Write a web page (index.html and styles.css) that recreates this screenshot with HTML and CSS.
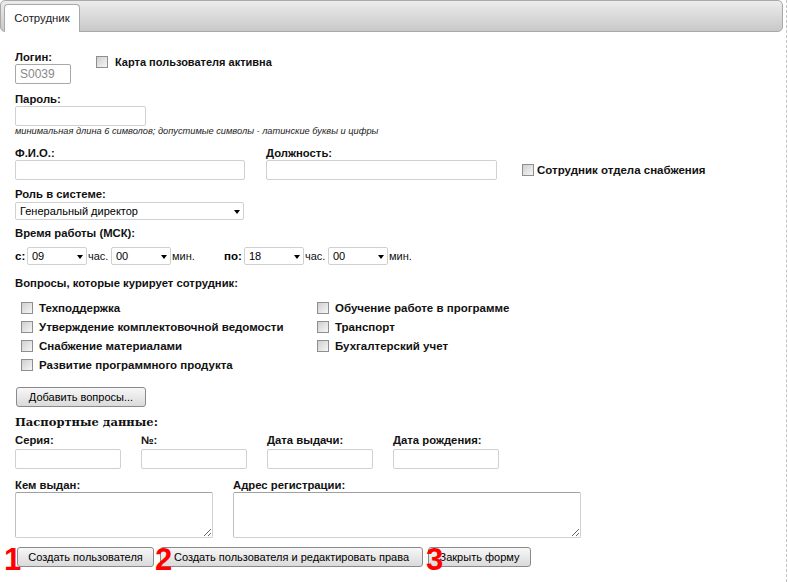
FILE: index.html
```html
<!DOCTYPE html>
<html lang="ru">
<head>
<meta charset="utf-8">
<title>Сотрудник</title>
<link rel="stylesheet" href="styles.css">
</head>
<body>
<div class="page">
  <div class="tabs"><div class="tab">Сотрудник</div></div>
  <div class="content">
    <div class="row row-login">
      <div class="field">
        <label class="lbl">Логин:</label>
        <div class="input input-login">S0039</div>
      </div>
      <div class="chk chk-card"><span class="box"></span><span>Карта пользователя активна</span></div>
    </div>

    <div class="field field-pass">
      <label class="lbl">Пароль:</label>
      <div class="input input-pass"></div>
    </div>
    <div class="hint">минимальная длина 6 символов; допустимые символы - латинские буквы и цифры</div>

    <div class="row row-fio">
      <div class="field">
        <label class="lbl">Ф.И.О.:</label>
        <div class="input input-fio"></div>
      </div>
      <div class="field">
        <label class="lbl">Должность:</label>
        <div class="input input-post"></div>
      </div>
      <div class="chk chk-supply"><span class="box"></span><span>Сотрудник отдела снабжения</span></div>
    </div>

    <div class="field field-role">
      <label class="lbl">Роль в системе:</label>
      <div class="select select-role"><span>Генеральный директор</span><i class="arrow"></i></div>
    </div>

    <div class="lbl lbl-time">Время работы (МСК):</div>
    <div class="time-row">
      <b class="t-from">с:</b>
      <div class="select select-time"><span>09</span><i class="arrow"></i></div>
      <span class="unit u-h">час.</span>
      <div class="select select-time"><span>00</span><i class="arrow"></i></div>
      <span class="unit">мин.</span>
      <b class="t-to">по:</b>
      <div class="select select-time"><span>18</span><i class="arrow"></i></div>
      <span class="unit u-h">час.</span>
      <div class="select select-time"><span>00</span><i class="arrow"></i></div>
      <span class="unit">мин.</span>
    </div>

    <div class="lbl lbl-q">Вопросы, которые курирует сотрудник:</div>
    <div class="questions">
      <div class="qcol qcol1">
        <div class="chk q"><span class="box"></span><span>Техподдержка</span></div>
        <div class="chk q"><span class="box"></span><span>Утверждение комплектовочной ведомости</span></div>
        <div class="chk q"><span class="box"></span><span>Снабжение материалами</span></div>
        <div class="chk q"><span class="box"></span><span>Развитие программного продукта</span></div>
      </div>
      <div class="qcol">
        <div class="chk q"><span class="box"></span><span>Обучение работе в программе</span></div>
        <div class="chk q"><span class="box"></span><span>Транспорт</span></div>
        <div class="chk q"><span class="box"></span><span>Бухгалтерский учет</span></div>
      </div>
    </div>

    <button class="btn btn-add" type="button">Добавить вопросы...</button>

    <div class="pass-title">Паспортные данные:</div>
    <div class="row row-pass">
      <div class="field"><label class="lbl">Серия:</label><div class="input input-sm"></div></div>
      <div class="field"><label class="lbl">№:</label><div class="input input-sm"></div></div>
      <div class="field"><label class="lbl">Дата выдачи:</label><div class="input input-sm"></div></div>
      <div class="field"><label class="lbl">Дата рождения:</label><div class="input input-sm"></div></div>
    </div>

    <div class="row row-area">
      <div class="field"><label class="lbl">Кем выдан:</label><textarea class="area area-issued"></textarea></div>
      <div class="field"><label class="lbl">Адрес регистрации:</label><textarea class="area area-addr"></textarea></div>
    </div>
  </div>

  <div class="actions">
    <div class="act act1"><span class="num n1">1</span><button class="btn btn-create" type="button">Создать пользователя</button></div>
    <div class="act act2"><span class="num n2">2</span><button class="btn btn-create2" type="button">Создать пользователя и редактировать права</button></div>
    <div class="act act3"><span class="num n3">3</span><button class="btn btn-close" type="button">Закрыть форму</button></div>
  </div>
</div>
</body>
</html>
```

FILE: styles.css
```css
html, body {
  margin: 0;
  padding: 0;
  background: #fff;
}
body {
  font-family: "Liberation Sans", Arial, sans-serif;
  font-size: 12px;
  color: #000;
}
.page {
  width: 787px;
  height: 582px;
  box-sizing: border-box;
  border-right: 1px dashed #c4c4c4;
  overflow: hidden;
}
.tabs {
  width: 783px;
  height: 32px;
  box-sizing: border-box;
  border: 1px solid #a9a9a9;
  border-radius: 5px;
  background: linear-gradient(#ececec, #c8c8c8);
  padding: 3px 0 0 3px;
  display: flex;
  align-items: flex-start;
}
.tab {
  width: 76px;
  height: 28px;
  box-sizing: border-box;
  background: #fff;
  border: 1px solid #a9a9a9;
  border-bottom: none;
  border-radius: 4px 4px 0 0;
  text-align: center;
  line-height: 27px;
  font-size: 11.4px;
  color: #222;
}
.content {
  padding-left: 15px;
}
.row {
  display: flex;
}
.field {
  display: flex;
  flex-direction: column;
}
.lbl {
  display: block;
  font-weight: bold;
  font-size: 11.3px;
  line-height: 14px;
  color: #111;
}
.input {
  height: 20px;
  box-sizing: border-box;
  border: 1px solid #d0d0d0;
  border-radius: 2px;
  background: #fff;
  font-size: 12px;
  line-height: 18px;
  padding-left: 4px;
}
.row-login {
  margin-top: 18px;
}
.input-login {
  width: 56px;
  color: #888;
  border-color: #a8a8a8;
}
.chk {
  display: flex;
  align-items: center;
  font-weight: bold;
  font-size: 11.5px;
  line-height: 14px;
  color: #111;
}
.box {
  width: 12px;
  height: 12px;
  box-sizing: border-box;
  border: 1px solid #8e8e8e;
  background: linear-gradient(135deg, #cfcfcf, #f6f6f6);
  flex: none;
}
.chk-card {
  margin-left: 25px;
  margin-top: 5px;
  align-self: flex-start;
  gap: 7px;
  font-size: 11px;
}
.field-pass {
  margin-top: 8px;
}
.input-pass {
  width: 131px;
}
.hint {
  font-style: italic;
  font-size: 9.25px;
  line-height: 11px;
  color: #222;
}
.row-fio {
  margin-top: 9px;
  gap: 21px;
}
.input-fio {
  width: 230px;
}
.input-post {
  width: 231px;
}
.chk-supply {
  margin-top: 14px;
  height: 20px;
  margin-left: 4px;
  gap: 3px;
}
.field-role {
  margin-top: 7px;
}
.select {
  position: relative;
  box-sizing: border-box;
  height: 18px;
  border: 1px solid #d0d0d0;
  border-radius: 2px;
  background: #fff;
  font-size: 11px;
  line-height: 16px;
  padding-left: 4px;
  color: #000;
}
.arrow {
  position: absolute;
  right: 3px;
  top: 7px;
  width: 0;
  height: 0;
  border-left: 3.5px solid transparent;
  border-right: 3.5px solid transparent;
  border-top: 4px solid #000;
}
.select-role {
  width: 229px;
  margin-top: 1px;
}
.lbl-time {
  margin-top: 6px;
}
.time-row {
  margin-top: 7px;
  display: flex;
  align-items: center;
  font-size: 11px;
  height: 18px;
}
.time-row b {
  font-size: 11.5px;
}
.t-from {
  width: 12px;
}
.select-time {
  width: 60px;
}
.unit {
  margin-left: 1px;
  width: 23px;
  color: #111;
}
.u-h {
  width: 23px;
}
.t-to {
  margin-left: 29px;
  width: 20px;
}
.lbl-q {
  margin-top: 11px;
}
.questions {
  margin-top: 8px;
  display: flex;
  padding-left: 6px;
}
.qcol1 {
  width: 296px;
}
.q {
  height: 19px;
  gap: 6px;
}
.btn {
  font-family: "Liberation Sans", Arial, sans-serif;
  font-size: 11px;
  color: #000;
  height: 20px;
  box-sizing: border-box;
  border: 1px solid #8a8a8a;
  border-radius: 3px;
  background: linear-gradient(#f7f7f7, #dadada);
  padding: 0;
  line-height: 18px;
  display: block;
}
.btn-add {
  margin-top: 13px;
  margin-left: 1px;
  width: 130px;
}
.pass-title {
  margin-top: 8px;
  font-family: "DejaVu Serif", Georgia, serif;
  font-weight: bold;
  font-size: 11.5px;
  line-height: 14px;
  color: #111;
}
.row-pass {
  margin-top: 4px;
  gap: 20px;
}
.row-pass .input {
  margin-top: 2px;
}
.input-sm {
  width: 106px;
}
.row-area {
  margin-top: 9px;
  gap: 20px;
}
.area {
  display: block;
  margin: 0;
  height: 46px;
  box-sizing: border-box;
  border: 1px solid #d0d0d0;
  border-top-color: #a0a0a0;
  border-left-color: #c0c0c0;
  border-radius: 2px;
  background: #fff;
}
.area-issued {
  width: 198px;
}
.area-addr {
  width: 348px;
}
.actions {
  margin-top: 9px;
  display: flex;
  padding-left: 17px;
}
.act {
  position: relative;
}
.act2 {
  margin-left: 6px;
}
.act3 {
  margin-left: 5px;
}
.btn-create {
  width: 137px;
}
.btn-create2 {
  width: 263px;
}
.btn-close {
  width: 103px;
}
.num {
  position: absolute;
  top: -1px;
  font-family: "Liberation Sans", Arial, sans-serif;
  font-weight: bold;
  font-size: 31px;
  line-height: 28px;
  color: #f00;
  z-index: 2;
}
.n1 { left: -13px; }
.n2 { left: -5px; }
.n3 { left: -2px; }
```
